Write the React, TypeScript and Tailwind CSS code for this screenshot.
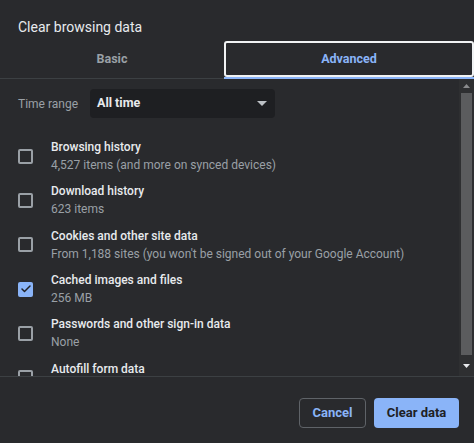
import { Check } from "lucide-react";

const items = [
  { title: "Browsing history", sub: "4,527 items (and more on synced devices)", checked: false },
  { title: "Download history", sub: "623 items", checked: false },
  { title: "Cookies and other site data", sub: "From 1,188 sites (you won't be signed out of your Google Account)", checked: false },
  { title: "Cached images and files", sub: "256 MB", checked: true },
  { title: "Passwords and other sign-in data", sub: "None", checked: false },
  { title: "Autofill form data", sub: "", checked: false },
];

function Checkbox({ checked }: { checked: boolean }) {
  if (checked) {
    return (
      <div className="w-[15px] h-[15px] shrink-0 rounded-[2px] bg-[#8ab4f8] flex items-center justify-center">
        <Check className="w-[12px] h-[12px] text-[#202124]" strokeWidth={3} />
      </div>
    );
  }
  return <div className="w-[15px] h-[15px] shrink-0 rounded-[2px] border-2 border-[#9aa0a6]" />;
}

export default function App() {
  return (
    <div className="w-[474px] h-[443px] bg-[#292a2d] flex flex-col overflow-hidden font-['Roboto',sans-serif]">
      <div className="h-[41px] px-[18px] pt-[17px] text-[14px] leading-[20px] text-[#e8eaed]">
        Clear browsing data
      </div>

      <div className="flex h-[38px]">
        <div className="w-[224px] flex flex-col">
          <div className="flex-1 flex items-center justify-center text-[12.5px] font-bold text-[#9aa0a6]">
            Basic
          </div>
          <div className="h-px bg-[#3c4043]" />
        </div>
        <div className="flex-1 flex flex-col">
          <div className="flex-1 flex items-center justify-center border-2 border-[#f1f3f4] rounded-[3px] text-[12.5px] font-bold text-[#8ab4f8]">
            Advanced
          </div>
          <div className="h-[2px] bg-[#8ab4f8]" />
        </div>
      </div>

      <div className="flex h-[297px]">
        <div className="flex-1 overflow-hidden">
          <div className="flex items-center pt-[10px] pl-[18px]">
            <span className="text-[12px] text-[#9aa0a6] w-[72px]">Time range</span>
            <div className="w-[185px] h-[29px] rounded-[4px] bg-[#1e1f22] flex items-center justify-between pl-[7px] pr-[8px]">
              <span className="text-[12.5px] font-bold text-[#e8eaed]">All time</span>
              <svg width="10" height="5" viewBox="0 0 10 5">
                <path d="M0 0 L10 0 L5 5 Z" fill="#bdc1c6" />
              </svg>
            </div>
          </div>

          <div className="pt-[16px]">
            {items.map((it) => (
              <div key={it.title} className="h-[44.3px] shrink-0 flex items-center pl-[18px] gap-[18px]">
                <Checkbox checked={it.checked} />
                <div className="flex flex-col">
                  <span className="text-[12px] leading-[18px] font-medium text-[#e8eaed]">{it.title}</span>
                  <span className="min-h-[18px] text-[12px] leading-[18px] text-[#9aa0a6]">{it.sub}</span>
                </div>
              </div>
            ))}
          </div>
        </div>

        <div className="w-[15px] bg-[#2e2f31] flex flex-col">
          <div className="h-[14px] flex items-center justify-center">
            <svg width="7" height="4" viewBox="0 0 7 4">
              <path d="M0 4 L7 4 L3.5 0 Z" fill="#8a8b8d" />
            </svg>
          </div>
          <div className="flex-1 mx-[2px] bg-[#5b5c5e]" />
          <div className="h-[21px] flex items-center justify-center">
            <svg width="7" height="4" viewBox="0 0 7 4">
              <path d="M0 0 L7 0 L3.5 4 Z" fill="#e8eaed" />
            </svg>
          </div>
        </div>
      </div>

      <div className="h-px bg-[#3c4043]" />

      <div className="flex-1 flex items-start justify-end gap-[8px] pt-[21px] pr-[15px]">
        <button className="w-[67px] h-[30px] rounded-[4px] border border-[#5f6368] text-[13px] font-bold text-[#8ab4f8]">
          Cancel
        </button>
        <button className="w-[85px] h-[30px] rounded-[4px] bg-[#8ab4f8] text-[13px] font-bold text-[#202124]">
          Clear data
        </button>
      </div>
    </div>
  );
}
